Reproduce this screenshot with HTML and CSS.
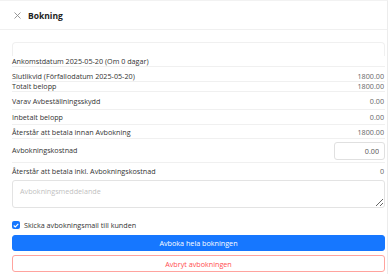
FILE: index.html
```html
<!DOCTYPE html>
<html lang="sv">
<head>
<meta charset="UTF-8" />
<meta name="viewport" content="width=device-width, initial-scale=1.0"/>
<title>Bokning</title>
<link rel="stylesheet" href="styles.css">
</head>
<body>
<div class="modal">
  <div class="head">
    <svg class="close" width="7" height="7" viewBox="0 0 7 7"><path d="M0.5 0.5L6.5 6.5M6.5 0.5L0.5 6.5" stroke="#8c8c8c" stroke-width="0.9" fill="none"/></svg>
    <span class="title">Bokning</span>
  </div>

  <div class="body">
    <div class="card">
      <div class="card-top"></div>
      <div class="row r-ank"><span>Ankomstdatum 2025-05-20 (Om 0 dagar)</span></div>
      <div class="row r-slut"><span>Slutlikvid (Förfallodatum 2025-05-20)</span><span class="val">1800.00</span></div>
      <div class="row r-tot"><span>Totalt belopp</span><span class="val">1800.00</span></div>
      <div class="row r-varav"><span>Varav Avbeställningsskydd</span><span class="val">0.00</span></div>
      <div class="row r-inb"><span>Inbetalt belopp</span><span class="val">0.00</span></div>
      <div class="row r-ater"><span>Återstår att betala innan Avbokning</span><span class="val">1800.00</span></div>
      <div class="row r-kost"><span>Avbokningskostnad</span><input class="cost" type="text" value="0.00"/></div>
      <div class="row r-inkl"><span>Återstår att betala inkl. Avbokningskostnad</span><span class="val">0</span></div>
    </div>

    <textarea class="msg" placeholder="Avbokningsmeddelande"></textarea>

    <label class="check">
      <span class="box"><svg width="6" height="5" viewBox="0 0 6 5"><path d="M0.7 2.5L2.3 4L5.3 0.9" stroke="#fff" stroke-width="1.1" fill="none"/></svg></span>
      Skicka avbokningsmail till kunden
    </label>

    <button class="btn primary">Avboka hela bokningen</button>
    <button class="btn danger">Avbryt avbokningen</button>
  </div>
</div>
</body>
</html>
```

FILE: styles.css
```css
body {
  margin: 0;
  font-family: "Open Sans", Arial, sans-serif;
  font-size: 7.2px;
  color: #333;
  background: #fff;
}

.modal {
  width: 388px;
  height: 274px;
  border-top: 1px solid #f2f2f2;
  border-right: 1px solid #ececec;
  box-sizing: border-box;
}

.head {
  display: flex;
  align-items: center;
  height: 28px;
  padding-left: 14px;
  border-bottom: 1px solid #f0f0f0;
}

.close {
  margin-right: 7px;
}

.title {
  font-size: 8.5px;
  font-weight: 700;
  color: #222;
}

.body {
  padding: 12px 2px 0 12px;
}

.card-top {
  height: 13px;
  border: 1px solid #f0f0f0;
  border-bottom: none;
  border-radius: 4px 4px 0 0;
}

.row {
  display: flex;
  justify-content: space-between;
  line-height: 9px;
  border-bottom: 1px solid #f0f0f0;
  box-sizing: border-box;
}

.val {
  color: #666;
  padding-right: 1px;
}

.r-ank { height: 11px; padding-top: 1px; }
.r-slut { height: 15px; padding-top: 5px; }
.r-tot { height: 10px; }
.r-varav { height: 18px; padding-top: 5px; }
.r-inb { height: 15px; padding-top: 3px; }
.r-ater { height: 14px; padding-top: 3px; }
.r-kost { height: 24px; align-items: center; }
.r-inkl { height: 14px; padding-top: 4px; border-bottom: none; }

.cost {
  width: 51px;
  height: 18px;
  box-sizing: border-box;
  border: 1px solid #e0e0e0;
  border-radius: 3px;
  font: inherit;
  color: #555;
  text-align: right;
  padding: 0 5px;
}

.msg {
  display: block;
  width: 373px;
  height: 28px;
  margin-top: 3px;
  box-sizing: border-box;
  border: 1px solid #e3e3e3;
  border-radius: 3px;
  font: inherit;
  padding: 5px 7px;
  resize: vertical;
}

.msg::placeholder {
  color: #bfbfbf;
}

.check {
  display: flex;
  align-items: center;
  margin-top: 13px;
  height: 8px;
}

.box {
  display: inline-flex;
  align-items: center;
  justify-content: center;
  width: 8px;
  height: 8px;
  border-radius: 2px;
  background: #1677ff;
  margin-right: 4px;
}

.btn {
  display: block;
  width: 373px;
  font: inherit;
  border-radius: 3px;
  cursor: pointer;
}

.primary {
  height: 16px;
  margin-top: 6px;
  background: #1677ff;
  border: 1px solid #1677ff;
  color: #fff;
}

.danger {
  height: 17px;
  margin-top: 4px;
  background: #fff;
  border: 1px solid #ffa39e;
  color: #ff4d4f;
}
```
